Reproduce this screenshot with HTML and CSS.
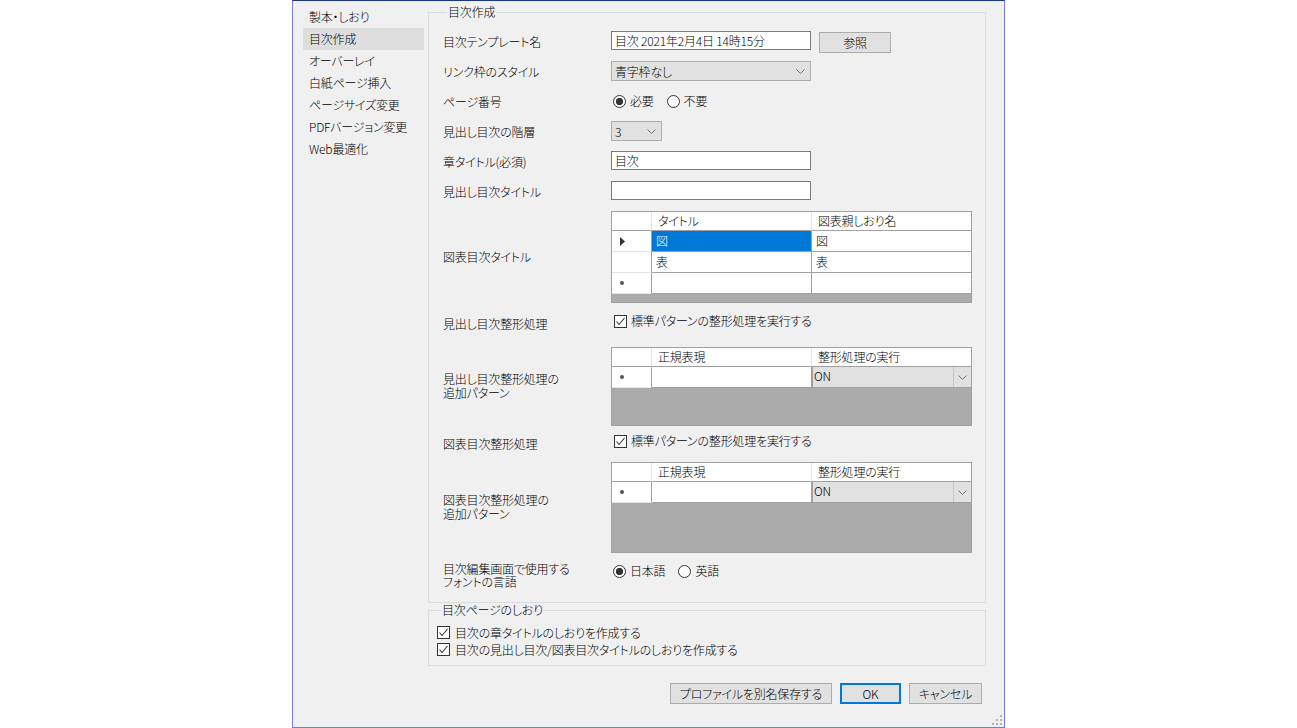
FILE: index.html
```html
<!DOCTYPE html>
<html lang="ja">
<head>
<meta charset="UTF-8" />
<title>目次作成</title>
<link rel="stylesheet" href="styles.css">
</head>
<body>

<div class="dialog">
  <div class="body">
    <ul class="nav">
      <li>製本・しおり</li>
      <li class="active">目次作成</li>
      <li>オーバーレイ</li>
      <li>白紙ページ挿入</li>
      <li>ページサイズ変更</li>
      <li>PDFバージョン変更</li>
      <li>Web最適化</li>
    </ul>

    <div class="main">
      <fieldset class="group toc">
        <legend>目次作成</legend>
        <div class="form">
          <div class="label">目次テンプレート名</div>
          <div class="ctrl">
            <div class="textbox">目次 2021年2月4日 14時15分</div>
            <div class="btn ref">参照</div>
          </div>

          <div class="label">リンク枠のスタイル</div>
          <div class="ctrl">
            <div class="combo wide"><span>青字枠なし</span><svg class="chev" width="9" height="5" viewBox="0 0 9 5"><polyline points="0.5,0.5 4.5,4.5 8.5,0.5" /></svg></div>
          </div>

          <div class="label">ページ番号</div>
          <div class="ctrl radios">
            <span class="opt"><span class="radio on"></span>必要</span>
            <span class="opt"><span class="radio"></span>不要</span>
          </div>

          <div class="label">見出し目次の階層</div>
          <div class="ctrl">
            <div class="combo small"><span>3</span><svg class="chev" width="9" height="5" viewBox="0 0 9 5"><polyline points="0.5,0.5 4.5,4.5 8.5,0.5" /></svg></div>
          </div>

          <div class="label">章タイトル(必須)</div>
          <div class="ctrl"><div class="textbox">目次</div></div>

          <div class="label">見出し目次タイトル</div>
          <div class="ctrl"><div class="textbox"></div></div>

          <div class="label mid">図表目次タイトル</div>
          <div class="ctrl">
            <div class="dgv h92">
              <div class="row head">
                <div class="cell rh"></div>
                <div class="cell">タイトル</div>
                <div class="cell">図表親しおり名</div>
              </div>
              <div class="row">
                <div class="cell rh"><svg width="5" height="9" viewBox="0 0 5 9"><polygon points="0,0 5,4.5 0,9" /></svg></div>
                <div class="cell sel">図</div>
                <div class="cell">図</div>
              </div>
              <div class="row">
                <div class="cell rh"></div>
                <div class="cell">表</div>
                <div class="cell">表</div>
              </div>
              <div class="row">
                <div class="cell rh"><span class="newrow"></span></div>
                <div class="cell"></div>
                <div class="cell"></div>
              </div>
            </div>
          </div>

          <div class="label pad8">見出し目次整形処理</div>
          <div class="ctrl pad8">
            <span class="check-opt"><span class="checkbox"><svg width="11" height="11" viewBox="0 0 11 11"><polyline points="1.5,5.5 4,8.5 9.5,2" /></svg></span>標準パターンの整形処理を実行する</span>
          </div>

          <div class="label mid two">見出し目次整形処理の<br>追加パターン</div>
          <div class="ctrl">
            <div class="dgv h79">
              <div class="row head">
                <div class="cell rh"></div>
                <div class="cell">正規表現</div>
                <div class="cell">整形処理の実行</div>
              </div>
              <div class="row">
                <div class="cell rh"><span class="newrow"></span></div>
                <div class="cell"></div>
                <div class="cell cbox"><span>ON</span><span class="dd"><svg class="chev" width="9" height="5" viewBox="0 0 9 5"><polyline points="0.5,0.5 4.5,4.5 8.5,0.5" /></svg></span></div>
              </div>
            </div>
          </div>

          <div class="label pad10">図表目次整形処理</div>
          <div class="ctrl pad10">
            <span class="check-opt"><span class="checkbox"><svg width="11" height="11" viewBox="0 0 11 11"><polyline points="1.5,5.5 4,8.5 9.5,2" /></svg></span>標準パターンの整形処理を実行する</span>
          </div>

          <div class="label mid two">図表目次整形処理の<br>追加パターン</div>
          <div class="ctrl">
            <div class="dgv h91">
              <div class="row head">
                <div class="cell rh"></div>
                <div class="cell">正規表現</div>
                <div class="cell">整形処理の実行</div>
              </div>
              <div class="row">
                <div class="cell rh"><span class="newrow"></span></div>
                <div class="cell"></div>
                <div class="cell cbox"><span>ON</span><span class="dd"><svg class="chev" width="9" height="5" viewBox="0 0 9 5"><polyline points="0.5,0.5 4.5,4.5 8.5,0.5" /></svg></span></div>
              </div>
            </div>
          </div>

          <div class="label lang">目次編集画面で使用する<br>フォントの言語</div>
          <div class="ctrl radios pad-lang">
            <span class="opt"><span class="radio on"></span>日本語</span>
            <span class="opt"><span class="radio"></span>英語</span>
          </div>
        </div>
      </fieldset>

      <fieldset class="group marks">
        <legend>目次ページのしおり</legend>
        <div class="check-line"><span class="checkbox"><svg width="11" height="11" viewBox="0 0 11 11"><polyline points="1.5,5.5 4,8.5 9.5,2" /></svg></span>目次の章タイトルのしおりを作成する</div>
        <div class="check-line"><span class="checkbox"><svg width="11" height="11" viewBox="0 0 11 11"><polyline points="1.5,5.5 4,8.5 9.5,2" /></svg></span>目次の見出し目次/図表目次タイトルのしおりを作成する</div>
      </fieldset>
    </div>
  </div>

  <div class="footer">
    <div class="btn save">プロファイルを別名保存する</div>
    <div class="btn ok">OK</div>
    <div class="btn cancel">キャンセル</div>
  </div>

  <svg class="grip" width="11" height="11" viewBox="0 0 11 11">
    <rect x="8" y="0" width="2" height="2" />
    <rect x="4" y="4" width="2" height="2" />
    <rect x="8" y="4" width="2" height="2" />
    <rect x="0" y="8" width="2" height="2" />
    <rect x="4" y="8" width="2" height="2" />
    <rect x="8" y="8" width="2" height="2" />
  </svg>
</div>

</body>
</html>
```

FILE: styles.css
```css
html, body {
  margin: 0; padding: 0;
  background: #fff;
  font-family: "Noto Sans CJK JP", "Noto Sans", sans-serif;
  font-size: 12px;
  font-weight: 300;
  font-feature-settings: "palt";
  letter-spacing: -0.2px;
  color: #000;
}
.dialog {
  position: relative;
  width: 713px;
  height: 728px;
  margin: 0 auto;
  box-sizing: border-box;
  background: #f0f0f0;
  border: 1px solid #7b7bd4;
  border-top-color: #1c3580;
  display: flex;
  flex-direction: column;
}
.body {
  display: flex;
  gap: 4px;
  padding: 0 18px 0 10px;
}
.nav {
  list-style: none;
  margin: 0;
  padding: 5px 0 0;
  width: 121px;
}
.nav li {
  height: 22px;
  line-height: 22px;
  padding-left: 6px;
}
.nav li.active {
  background: #dedede;
}
.main {
  width: 558px;
  padding-top: 4px;
}
.group {
  margin: 0;
  padding: 0;
  border: 1px solid #dcdcdc;
  min-inline-size: 0;
}
.group legend {
  margin-left: 4px;
  padding: 0 1px;
  line-height: 14px;
}
.toc {
  padding: 12px 0 1px 14px;
}
.form {
  display: grid;
  grid-template-columns: 168px 361px;
  grid-template-rows: 30px 30px 30px 30px 30px 30px 92px 44px 79px 36px 91px 48px;
}
.label {
  padding-top: 1px;
  line-height: 20px;
  white-space: nowrap;
}
.label.mid {
  align-self: center;
  padding-top: 0;
}
.label.two {
  line-height: 14px;
  padding-bottom: 1px;
}
.label.pad8 { padding-top: 11px; }
.label.pad10 { padding-top: 8px; }
.label.lang {
  line-height: 13px;
  padding-top: 9px;
}
.ctrl {
  display: flex;
  align-items: flex-start;
  gap: 8px;
}
.ctrl.pad8 { padding-top: 10px; }
.ctrl.pad10 { padding-top: 7px; }
.ctrl.pad-lang { padding-top: 8px; }

.textbox {
  width: 200px;
  height: 19px;
  box-sizing: border-box;
  border: 1px solid #7a7a7a;
  background: #fff;
  padding-left: 3px;
  line-height: 17px;
  white-space: nowrap;
  overflow: hidden;
}
.btn {
  height: 21px;
  box-sizing: border-box;
  border: 1px solid #adadad;
  background: #e1e1e1;
  display: flex;
  align-items: center;
  justify-content: center;
  white-space: nowrap;
}
.btn.ref {
  width: 72px;
  margin-top: 1px;
}
.combo {
  height: 20px;
  box-sizing: border-box;
  border: 1px solid #adadad;
  background: #e1e1e1;
  display: flex;
  align-items: center;
  justify-content: space-between;
  padding: 0 5px 0 3px;
}
.combo.wide { width: 200px; }
.combo.small { width: 51px; }
.chev {
  fill: none;
  stroke: #707070;
  stroke-width: 1;
}

.radios {
  gap: 13px;
  line-height: 20px;
}
.opt {
  display: flex;
  align-items: center;
  gap: 4px;
  margin-left: 2px;
}
.opt + .opt { margin-left: 0; }
.radio {
  width: 13px;
  height: 13px;
  box-sizing: border-box;
  border: 1px solid #333;
  border-radius: 50%;
  background: #fff;
}
.radio.on {
  background: radial-gradient(circle, #333 0 3.4px, #fff 3.9px);
}
.check-opt {
  display: flex;
  align-items: center;
  gap: 4px;
  line-height: 16px;
  margin-left: 3px;
}
.checkbox {
  width: 13px;
  height: 13px;
  box-sizing: border-box;
  border: 1px solid #333;
  background: #fff;
  display: flex;
  align-items: center;
  justify-content: center;
}
.checkbox svg {
  fill: none;
  stroke: #333;
  stroke-width: 1.1;
}

.dgv {
  width: 361px;
  box-sizing: border-box;
  border: 1px solid #a0a0a0;
  background: #ababab;
}
.dgv.h92 { height: 92px; }
.dgv.h79 { height: 79px; }
.dgv.h91 { height: 91px; }
.row {
  display: grid;
  grid-template-columns: 40px 160px 159px;
  height: 21px;
}
.row.head { height: 19px; }
.cell {
  box-sizing: border-box;
  background: #fff;
  border-right: 1px solid #a0a0a0;
  border-bottom: 1px solid #a0a0a0;
  padding-left: 4px;
  line-height: 19px;
  white-space: nowrap;
  overflow: hidden;
}
.row.head .cell {
  line-height: 18px;
  padding-left: 6px;
  border-right-color: #e3e3e3;
}
.cell:last-child { border-right: none; }
.cell.rh {
  border-right-color: #a0a0a0;
  border-bottom-color: #e3e3e3;
  display: flex;
  align-items: center;
  padding-left: 8px;
}
.row.head .cell.rh { border-right-color: #e3e3e3; border-bottom-color: #a0a0a0; }
.cell.rh svg { fill: #333; }
.newrow {
  width: 4px;
  height: 4px;
  border-radius: 50%;
  background: #555;
}
.cell.sel {
  background: #0078d7;
  color: #fff;
}
.cell.cbox {
  display: flex;
  justify-content: space-between;
  padding: 0;
  background: #e1e1e1;
  border: 1px solid #a0a0a0;
  border-right: none;
  border-top: none;
}
.cell.cbox span:first-child { padding-left: 1px; line-height: 18px; }
.cbox .dd {
  width: 17px;
  border-left: 1px solid #c8c8c8;
  display: flex;
  align-items: center;
  justify-content: center;
}

.marks {
  padding: 7px 0 7px 8px;
}
.check-line {
  display: flex;
  align-items: center;
  gap: 5px;
  height: 17px;
  white-space: nowrap;
}

.footer {
  display: flex;
  justify-content: flex-end;
  gap: 8px;
  margin-top: 17px;
  padding-right: 22px;
}
.btn.save { width: 162px; }
.btn.ok {
  width: 61px;
  border: 2px solid #0078d7;
}
.btn.cancel { width: 73px; }
.grip {
  position: absolute;
  right: 1px;
  bottom: 1px;
  fill: #b4b4b4;
}
```
